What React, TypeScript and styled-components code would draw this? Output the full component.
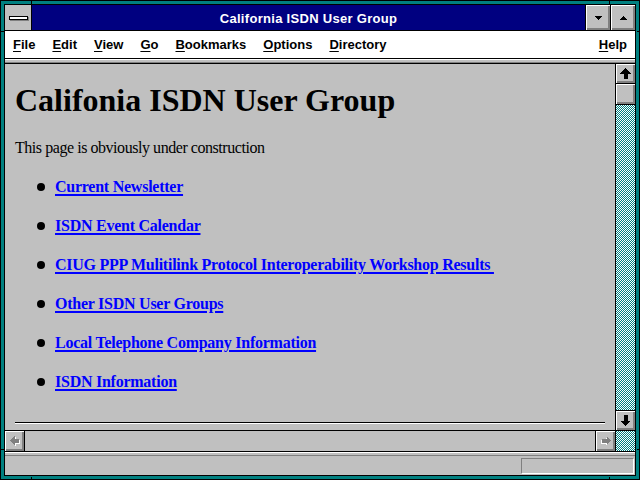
import React from "react";
import styled, { createGlobalStyle } from "styled-components";

const Global = createGlobalStyle`
  html, body { margin: 0; padding: 0; width: 640px; height: 480px; overflow: hidden; background: #008080; }
  #root { width: 640px; height: 480px; }
  * { box-sizing: border-box; }
`;

const Frame = styled.div`
  position: relative;
  width: 640px;
  height: 480px;
  border: 1px solid #000;
  background: #008080;
  padding: 3px;
`;

const Tick = styled.div<{ $x: number; $y: number; $w: number; $h: number }>`
  position: absolute;
  left: ${(p) => p.$x}px;
  top: ${(p) => p.$y}px;
  width: ${(p) => p.$w}px;
  height: ${(p) => p.$h}px;
  background: #000;
`;

const Inner = styled.div`
  height: 100%;
  border: 1px solid #000;
  display: flex;
  flex-direction: column;
  background: #c0c0c0;
`;

const TitleBar = styled.div`
  height: 26px;
  display: flex;
  border-bottom: 1px solid #000;
`;

const SysBox = styled.div`
  width: 27px;
  border-right: 1px solid #000;
  background: #c0c0c0;
  display: flex;
  align-items: center;
  justify-content: center;
`;

const SysBar = styled.div`
  width: 19px;
  height: 4px;
  border: 1px solid #000;
  background: #fff;
  box-shadow: 1px 1px 0 #808080;
  margin-top: 1px;
`;

const Title = styled.div`
  flex: 1;
  background: #000080;
  color: #fff;
  font: bold 13px "Liberation Sans", Arial, sans-serif;
  letter-spacing: 0.3px;
  display: flex;
  align-items: center;
  justify-content: center;
  padding-top: 1px;
`;

const CapButton = styled.div`
  width: 25px;
  border-left: 1px solid #000;
  background: #c0c0c0;
  box-shadow: inset 1px 1px 0 #fff, inset -1px -1px 0 #808080, inset -2px -2px 0 #808080;
  display: flex;
  align-items: center;
  justify-content: center;
  svg { display: block; }
`;

const MenuBar = styled.div`
  height: 28px;
  background: #fff;
  border-bottom: 1px solid #000;
  display: flex;
  align-items: center;
  gap: 17px;
  padding: 0 8px;
  font: bold 13px "Liberation Sans", Arial, sans-serif;
  color: #000;
`;

const MenuItem = styled.span<{ $right?: boolean }>`
  margin-left: ${(p) => (p.$right ? "auto" : "0")};
  u { text-decoration-thickness: 1px; text-underline-offset: 2px; }
`;

const Strip = styled.div`
  height: 5px;
  border-top: 1px solid #fff;
  border-bottom: 1px solid #000;
  background: #c0c0c0;
  box-shadow: inset 0 -1px 0 #808080;
`;

const Main = styled.div`
  height: 366px;
  display: flex;
`;

const Content = styled.div`
  flex: 1;
  padding: 18px 10px 0 10px;
  overflow: hidden;
  background: #c0c0c0;
  color: #000;
  font-family: "Liberation Serif", "Times New Roman", serif;
`;

const Heading = styled.h1`
  margin: 0;
  font: bold 32px/36px "Liberation Serif", "Times New Roman", serif;
`;

const Para = styled.p`
  margin: 20px 0 0;
  font: 16px/20px "Liberation Serif", "Times New Roman", serif;
  letter-spacing: -0.45px;
`;

const List = styled.ul`
  margin: 19px 0 0;
  padding: 0 0 0 22px;
  list-style: none;
  display: flex;
  flex-direction: column;
  gap: 19px;
`;

const Item = styled.li`
  height: 20px;
  display: flex;
  align-items: center;
  gap: 10px;
`;

const Bullet = styled.span`
  width: 8px;
  height: 8px;
  border-radius: 50%;
  background: #000;
  flex: none;
  margin-top: -1px;
`;

const Link = styled.a`
  color: #0000ff;
  font: bold 16px/20px "Liberation Serif", "Times New Roman", serif;
  letter-spacing: -0.25px;
  text-decoration: underline;
  text-decoration-thickness: 2px;
  text-underline-offset: 2px;
  white-space: pre;
  cursor: pointer;
`;

const Rule = styled.hr`
  margin: 30px 0 0;
  height: 2px;
  border: none;
  border-top: 1px solid #000;
  border-bottom: 1px solid #fff;
`;

const VScroll = styled.div`
  width: 20px;
  border-left: 1px solid #000;
  display: flex;
  flex-direction: column;
`;

const raised = `
  background: #c0c0c0;
  box-shadow: inset 1px 1px 0 #fff, inset -1px -1px 0 #808080, inset -2px -2px 0 #808080;
`;

const VButton = styled.div<{ $edge: "top" | "bottom" }>`
  height: 20px;
  ${raised}
  border-${(p) => (p.$edge === "top" ? "bottom" : "top")}: 1px solid #000;
  display: flex;
  align-items: center;
  justify-content: center;
  svg { display: block; }
`;

const Thumb = styled.div`
  height: 21px;
  ${raised}
  border-bottom: 1px solid #000;
`;

const Dither = styled.div`
  background-color: #008080;
  background-image: conic-gradient(#ffffff 25%, #008080 0 50%, #ffffff 0 75%, #008080 0);
  background-size: 2px 2px;
`;

const Track = styled(Dither)`
  flex: 1;
`;

const HScroll = styled.div`
  height: 21px;
  border-top: 1px solid #000;
  display: flex;
`;

const HButton = styled.div<{ $side: "left" | "right" }>`
  width: 20px;
  ${raised}
  border-${(p) => (p.$side === "left" ? "right" : "left")}: 1px solid #000;
  display: flex;
  align-items: center;
  justify-content: center;
  svg { display: block; }
`;

const HTrack = styled.div`
  flex: 1;
  background: #c0c0c0;
`;

const Corner = styled(Dither)`
  width: 20px;
  border-left: 1px solid #000;
`;

const StatusBar = styled.div`
  flex: 1;
  border-top: 1px solid #000;
  display: flex;
  flex-direction: column;
`;

const StatusRule = styled.div`
  height: 4px;
  border-top: 1px solid #fff;
  border-bottom: 1px solid #808080;
  background: #c0c0c0;
`;

const StatusRow = styled.div`
  flex: 1;
  display: flex;
  align-items: center;
  justify-content: flex-end;
  padding: 0 1px 0 0;
`;

const StatusCell = styled.div`
  width: 113px;
  height: 16px;
  border-top: 1px solid #808080;
  border-left: 1px solid #808080;
  border-bottom: 1px solid #fff;
  border-right: 1px solid #fff;
`;

const Tri = ({ up }: { up?: boolean }) => (
  <svg width="7" height="4" viewBox="0 0 7 4" shapeRendering="crispEdges">
    <polygon points={up ? "3.5,0 7,4 0,4" : "0,0 7,0 3.5,4"} fill="#000" />
  </svg>
);

const VArrow = ({ down }: { down?: boolean }) => (
  <svg width="11" height="11" viewBox="0 0 11 11" shapeRendering="crispEdges"
    style={down ? { transform: "rotate(180deg)" } : undefined}>
    <polygon points="5.5,0 11,5.5 7.5,5.5 7.5,11 3.5,11 3.5,5.5 0,5.5" fill="#000" />
  </svg>
);

const HArrow = ({ right }: { right?: boolean }) => (
  <svg width="10" height="10" viewBox="0 0 10 10" shapeRendering="crispEdges"
    style={right ? { transform: "scaleX(-1)" } : undefined}>
    <polygon transform="translate(1,1)" points="0,4.5 4.5,0 4.5,2.5 9,2.5 9,6.5 4.5,6.5 4.5,9" fill="#fff" />
    <polygon points="0,4.5 4.5,0 4.5,2.5 9,2.5 9,6.5 4.5,6.5 4.5,9" fill="#808080" />
  </svg>
);

const links = [
  "Current Newsletter",
  "ISDN Event Calendar",
  "CIUG PPP Mulitilink Protocol Interoperability Workshop Results ",
  "Other ISDN User Groups",
  "Local Telephone Company Information",
  "ISDN Information",
];

const menus = ["File", "Edit", "View", "Go", "Bookmarks", "Options", "Directory"];

export default function App() {
  return (
    <>
      <Global />
      <Frame>
        <Inner>
          <TitleBar>
            <SysBox>
              <SysBar />
            </SysBox>
            <Title>California ISDN User Group</Title>
            <CapButton><Tri /></CapButton>
            <CapButton><Tri up /></CapButton>
          </TitleBar>
          <MenuBar>
            {menus.map((m) => (
              <MenuItem key={m}>
                <u>{m[0]}</u>
                {m.slice(1)}
              </MenuItem>
            ))}
            <MenuItem $right>
              <u>H</u>elp
            </MenuItem>
          </MenuBar>
          <Strip />
          <Main>
            <Content>
              <Heading>Califonia ISDN User Group</Heading>
              <Para>This page is obviously under construction</Para>
              <List>
                {links.map((l) => (
                  <Item key={l}>
                    <Bullet />
                    <Link>{l}</Link>
                  </Item>
                ))}
              </List>
              <Rule />
            </Content>
            <VScroll>
              <VButton $edge="top"><VArrow /></VButton>
              <Thumb />
              <Track />
              <VButton $edge="bottom"><VArrow down /></VButton>
            </VScroll>
          </Main>
          <HScroll>
            <HButton $side="left"><HArrow /></HButton>
            <HTrack />
            <HButton $side="right"><HArrow right /></HButton>
            <Corner />
          </HScroll>
          <StatusBar>
            <StatusRule />
            <StatusRow>
              <StatusCell />
            </StatusRow>
          </StatusBar>
        </Inner>
        <Tick $x={30} $y={0} $w={1} $h={4} />
        <Tick $x={608} $y={0} $w={1} $h={4} />
        <Tick $x={0} $y={30} $w={4} $h={1} />
        <Tick $x={636} $y={30} $w={4} $h={1} />
        <Tick $x={30} $y={476} $w={1} $h={4} />
        <Tick $x={608} $y={476} $w={1} $h={4} />
        <Tick $x={0} $y={448} $w={4} $h={1} />
        <Tick $x={636} $y={448} $w={4} $h={1} />
      </Frame>
    </>
  );
}
